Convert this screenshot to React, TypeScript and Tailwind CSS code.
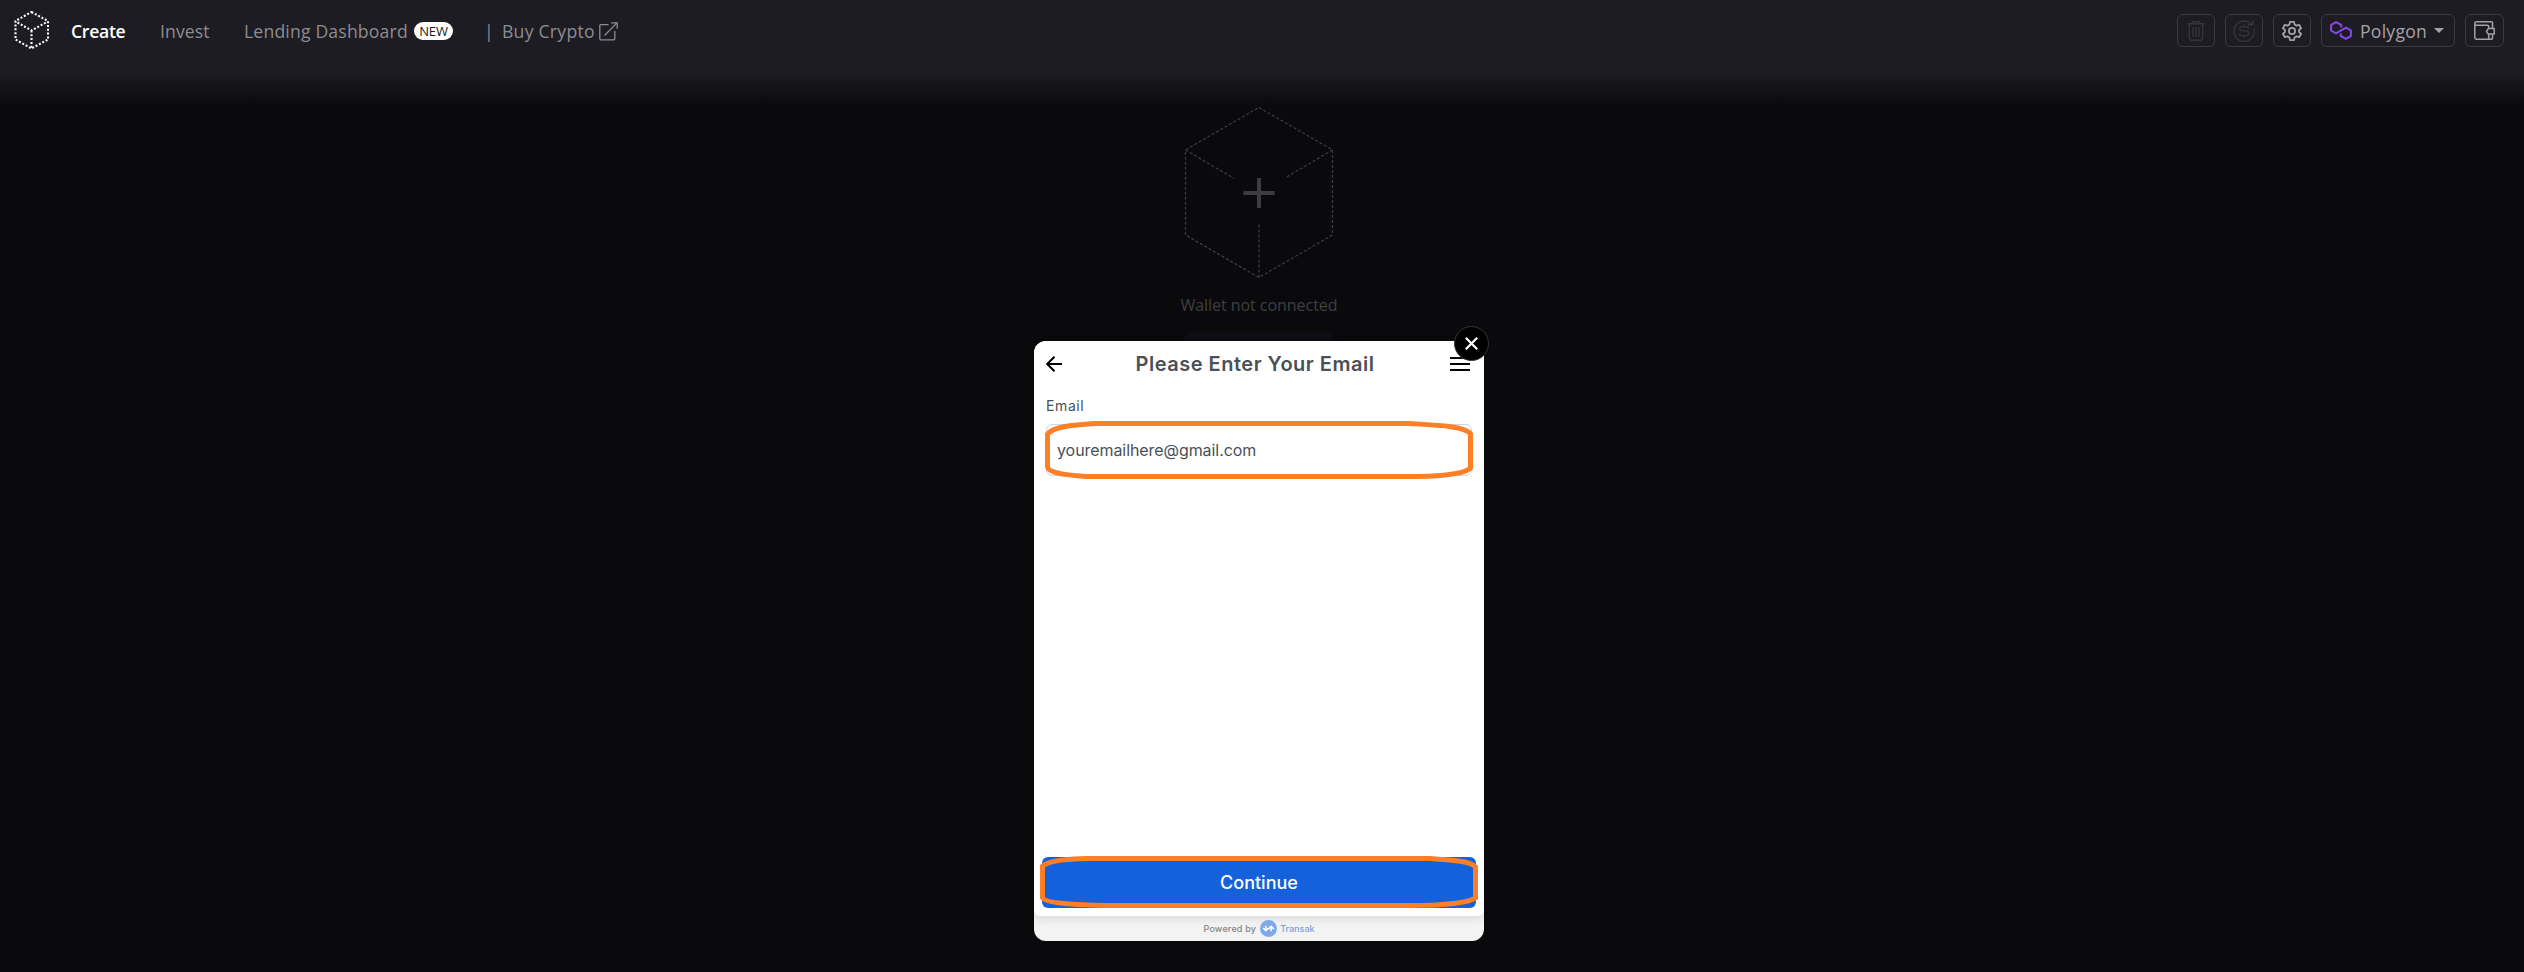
import React from 'react';

const navFont = "font-['Open_Sans',sans-serif]";

function SmallCube() {
  return (
    <svg className="h-10 w-9 shrink-0" viewBox="0 0 36 40" fill="none" stroke="#ffffff" strokeWidth="2.1" strokeDasharray="2 1.8">
      <path d="M17.500 1 34 10V28.500L17.500 37.500 1.500 28.500V10Z" />
      <path d="M3.500 11.500 17.500 19.500 32 11.500M17.500 19.500V37" />
    </svg>
  );
}

function ExternalIcon() {
  return (
    <svg className="h-[19px] w-[19px] shrink-0" viewBox="0 0 19 19" fill="none" stroke="#8d8c91" strokeWidth="1.3">
      <path d="M9.5 2.6H1.9Q.8 2.6.8 3.8V16.6Q.8 17.8 1.9 17.8H14.6Q15.8 17.8 15.8 16.6V9" />
      <path d="M5.5 13.5 17.7 1.1M12.2 .8H18.2V6.8" />
    </svg>
  );
}

function TrashIcon() {
  return (
    <svg className="h-5 w-[18px]" viewBox="0 0 18 20" fill="none" stroke="#34333f" strokeWidth="1.4">
      <path d="M.5 2.7H17.5M5.5 2.5V.8H12.5V2.5M2.3 3V17.5Q2.3 19.2 4 19.2H14Q15.7 19.2 15.7 17.5V3M6 6V16M9 6V16M12 6V16" />
    </svg>
  );
}

function RefundIcon() {
  return (
    <svg className="h-[22px] w-[22px]" viewBox="0 0 22 22" fill="none" stroke="#34333f" strokeWidth="1.4">
      <path d="M21 8.500A10.200 10.200 0 1 1 17.200 3L19.200 4.500M19.700 .3V4.700H14.800" />
      <path d="M15.200 8.400Q15.200 6.700 13.500 6.700H8.500Q6.700 6.700 6.700 8.600T8.500 10.900H13.500Q15.500 10.900 15.500 13.200T13.500 15.600H8.500Q6.500 15.600 6.500 13.900M11 4.500V6.700M11 15.600V17.800" />
    </svg>
  );
}

function GearIcon() {
  return (
    <svg className="h-5 w-5" viewBox="0 0 20 20" fill="none" stroke="#a3a2a6" strokeWidth="1.8" strokeLinejoin="round">
      <path d="M8 .9H12L12.6 3.5 14.5 4.6 17.1 3.8 19.1 7.2 17.1 9V11L19.1 12.8 17.1 16.2 14.5 15.4 12.6 16.5 12 19.1H8L7.4 16.5 5.5 15.4 2.9 16.2 .9 12.8 2.9 11V9L.9 7.2 2.9 3.8 5.5 4.6 7.4 3.5Z" />
      <circle cx="10" cy="10" r="3.1" />
    </svg>
  );
}

function PolygonIcon() {
  return (
    <svg className="h-[19px] w-[22px]" viewBox="0 0 22 19" fill="none" stroke="#8247e5" strokeWidth="2.1" strokeLinejoin="round">
      <path d="M11.2 6.4V3.9L6 1.100 1.100 3.9V9.6L6 12.4 16 6.6 20.900 9.4V15L16 17.900 10.8 15V12.6" />
    </svg>
  );
}

function WalletIcon() {
  return (
    <svg className="h-[19px] w-[21px]" viewBox="0 0 21 19" fill="none" stroke="#a3a2a6" strokeWidth="1.5">
      <path d="M18.5 7V1.7Q18.5.8 17.6.8H2.4Q.8.8.8 2.4V16.6Q.8 18.2 2.4 18.2H17.6Q18.5 18.2 18.5 17.3V13.5M1 4.3H13.3Q14.7 4.3 14.7 5.6V7.5M14.7 13V18" />
      <path d="M14.3 7.6H20.2V13.1H14.3L12.5 10.4Z" />
    </svg>
  );
}

function ToolButton({ children }: { children: React.ReactNode }) {
  return (
    <button className="flex h-[33px] w-[38px] items-center justify-center rounded-md border border-[#3a3946]">{children}</button>
  );
}

function Header() {
  return (
    <header className={`flex h-[106px] items-start justify-between bg-linear-to-b from-[#1d1c22] from-68% to-[#0a0a0c] ${navFont} text-[17.6px] leading-[34px] text-[#8d8c91]`}>
      <nav className="flex items-center pt-[14px] pl-[14px]">
        <div className="-my-2 flex w-[57px] items-center"><SmallCube /></div>
        <div className="w-[89px] whitespace-nowrap font-semibold tracking-[-0.3px] text-white">Create</div>
        <div className="w-[84px] whitespace-nowrap tracking-[0.1px]">Invest</div>
        <div className="w-[170px] whitespace-nowrap tracking-[0.18px]">Lending Dashboard</div>
        <div className="flex h-[18px] w-[39px] items-center justify-center rounded-full bg-white text-[13px] leading-none tracking-[-0.1px] text-[#1d1c22]">NEW</div>
        <div className="ml-[31px] w-[18px]">|</div>
        <div className="w-[97px] whitespace-nowrap tracking-[0.25px]">Buy Crypto</div>
        <ExternalIcon />
      </nav>
      <div className="flex gap-[10px] pt-[14px] pr-5">
        <ToolButton><TrashIcon /></ToolButton>
        <ToolButton><RefundIcon /></ToolButton>
        <ToolButton><GearIcon /></ToolButton>
        <button className="flex h-[33px] w-[134px] items-center rounded-md border border-[#3a3946] pl-2">
          <PolygonIcon />
          <span className="ml-2 w-[74px] text-left tracking-[0.25px] text-[#a3a2a6]">Polygon</span>
          <svg className="h-[5px] w-[10px]" viewBox="0 0 10 5"><path d="M0 0H10L5 5Z" fill="#a3a2a6" /></svg>
        </button>
        <button className="flex h-[33px] w-[39px] items-center justify-center rounded-md border border-[#3a3946]"><WalletIcon /></button>
      </div>
    </header>
  );
}

function WalletPlaceholder() {
  return (
    <section className={`flex flex-col items-center pr-[6px] ${navFont}`}>
      <svg className="h-[173px] w-[150px]" viewBox="0 0 150 173" fill="none" stroke="#3d3d3f">
        <g strokeDasharray="3 2" strokeWidth="1.2">
          <path d="M75 1.5 148.500 44V129L75 171.500 1.500 129V44Z" />
          <path d="M1.500 44 50 72.500M148.500 44 101 72M75 171.500V117" />
        </g>
        <path d="M59.500 87H90.500M75 72V102" strokeWidth="4" />
      </svg>
      <p className="mt-[14px] text-base leading-[25px] tracking-[-0.05px] whitespace-nowrap text-[#3f3f41]">Wallet not connected</p>
      <div className="mt-[14px] h-[60px] w-[150px] rounded-lg bg-[#0d0d13]" />
    </section>
  );
}

function Modal() {
  return (
    <div className="absolute top-[341px] left-[1034px] flex h-[600px] w-[450px] flex-col rounded-xl bg-[#f3f3f3] font-['Inter',sans-serif] text-[#4a5058]">
      <div className="flex h-[575px] flex-col rounded-t-xl rounded-b-md bg-white shadow-[0_3px_8px_rgba(0,0,0,0.1)]">
        <div className="flex h-[46px] items-center justify-between pr-[14px] pl-3">
          <svg className="h-4 w-4" viewBox="0 0 16 16" fill="none" stroke="#000000" strokeWidth="2"><path d="M16 8H1.500M8.500 .7 1.200 8 8.500 15.300" /></svg>
          <h1 className="mr-[2px] text-[20px] font-semibold tracking-[0.5px] whitespace-nowrap">Please Enter Your Email</h1>
          <svg className="h-[14px] w-5" viewBox="0 0 20 14" stroke="#000000" strokeWidth="2"><path d="M0 1H20M0 7H20M0 13H20" /></svg>
        </div>
        <label className="mt-[9px] ml-3 h-[28px] text-sm leading-[20px] tracking-[0.6px]">Email</label>
        <div className="relative mx-3 flex h-[52px] items-center rounded-md border border-[#d1d5db] pl-[10px] text-base tracking-[-0.07px]">
          youremailhere@gmail.com
          <svg className="absolute -top-[4px] -left-[2px] h-[58px] w-[429px]" viewBox="0 0 429 58" fill="none" stroke="#ff7f27" strokeWidth="5">
            <path d="M50 2.500H364C390 4 421 5 425.500 13V47C420 53 400 55 372 55.500H40C24 54 4 53 2.500 46V13C8 6 25 4 50 2.500Z" />
          </svg>
        </div>
        <button className="relative mx-2 mt-auto mb-2 h-[51px] rounded-md bg-[#1461db] text-lg font-medium text-white">
          Continue
          <svg className="absolute -top-[1px] -left-[2px] h-[52px] w-[438px]" viewBox="0 0 438 52" fill="none" stroke="#ff7f27" strokeWidth="5">
            <path d="M48 2.500H390C412 4 431 5 435.500 11V42C428 47 400 49.500 370 49.500H65C35 49 5 47 2.500 42V10C8 5 25 3 48 2.500Z" />
          </svg>
        </button>
      </div>
      <div className="flex h-[25px] items-center justify-center text-[9px] font-medium text-[#858585]">
        <span className="tracking-[0.2px]">Powered by</span>
        <svg className="mr-[3px] ml-1 h-[17px] w-[17px]" viewBox="0 0 16 16"><circle cx="8" cy="8" r="8" fill="#7fa9ea" /><path d="M3 7.500 5.500 10 8 7.500M8 8.500 10.500 6 13 8.500M5.500 5.500V10M10.500 10.500V6" stroke="#ffffff" strokeWidth="1.400" fill="none" /></svg>
        <span className="text-[#7a9fdc]">Transak</span>
      </div>
      <button className="absolute -top-[15px] -right-[5px] flex h-[35px] w-[35px] items-center justify-center rounded-full border border-[#333333] bg-black">
        <svg className="h-[13px] w-[13px]" viewBox="0 0 13 13" stroke="#ffffff" strokeWidth="2.200"><path d="M.8 .8 12.200 12.200M12.200 .8 .8 12.200" /></svg>
      </button>
    </div>
  );
}

export default function App() {
  return (
    <div className="relative h-[972px] w-[2524px] overflow-hidden bg-[#0a0a0c]">
      <Header />
      <WalletPlaceholder />
      <Modal />
    </div>
  );
}
